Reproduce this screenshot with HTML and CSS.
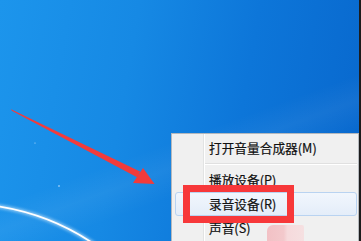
FILE: index.html
```html
<!DOCTYPE html>
<html lang="zh">
<head>
<meta charset="utf-8">
<link rel="stylesheet" href="styles.css">
</head>
<body>
<div class="desktop">
  <svg class="wallpaper" width="361" height="241" viewBox="0 0 361 241">
    <defs>
      <filter id="glow" x="-20%" y="-50%" width="140%" height="200%">
        <feGaussianBlur stdDeviation="1.4"/>
      </filter>
    </defs>
    <path d="M -4 206 Q 50 214 94 244" fill="none" stroke="#ffffff" stroke-width="4" opacity="0.5" filter="url(#glow)"/>
    <path d="M -4 206 Q 50 214 94 244" fill="none" stroke="#ffffff" stroke-width="1.8"/>
    <circle cx="59" cy="186" r="0.8" fill="#cfe8ff"/>
    <circle cx="35" cy="143" r="0.6" fill="#bfe0ff"/>
  </svg>

  <div class="menu">
    <div class="item">打开音量合成器(M)</div>
    <div class="sep"></div>
    <div class="item">播放设备(P)</div>
    <div class="item active">录音设备(R)</div>
    <div class="item">声音(S)</div>
  </div>

  <div class="blob"></div>
  <div class="redbox"></div>

  <svg class="arrow" width="361" height="241" viewBox="0 0 361 241">
    <polygon points="11,109.3 140,171.5 137.5,177.5 11.8,110.8" fill="#f23b3b"/>
    <polygon points="133,183 143,168 154.5,184" fill="#f23b3b"/>
  </svg>
</div>
</body>
</html>
```

FILE: styles.css
```css
html, body {
  margin: 0;
  padding: 0;
  background: #0a6ad0;
}

.desktop {
  position: relative;
  width: 361px;
  height: 241px;
  overflow: hidden;
  box-sizing: border-box;
  border-right: 2px solid #1c1c1c;
  background:
    linear-gradient(160deg, rgba(255,255,255,0) 55%, rgba(255,255,255,0.05) 62%, rgba(255,255,255,0) 70%),
    linear-gradient(100deg, #1c95ec 0%, #1689e4 35%, #0d76d9 65%, #0867cd 100%);
  font-family: "Noto Sans CJK SC", "Noto Sans", sans-serif;
}

.wallpaper {
  position: absolute;
  left: 0;
  top: 0;
}

.menu {
  position: absolute;
  left: 171px;
  top: 133px;
  width: 188px;
  height: 120px;
  box-sizing: border-box;
  border: 1px solid #b4b8bd;
  padding: 2px 1px 2px 3px;
  background: linear-gradient(to right, #f0f0f0 31px, #e2e3e3 31px, #e2e3e3 32px, #ffffff 32px, #ffffff 33px, #f0f0f0 33px);
  display: flex;
  flex-direction: column;
}

.item {
  height: 24px;
  line-height: 24px;
  padding-left: 34px;
  font-size: 12.7px;
  color: #111;
  -webkit-text-stroke: 0.2px #111;
  box-sizing: border-box;
  white-space: nowrap;
}

.item.active {
  border: 1px solid #b9d3f1;
  border-radius: 3px;
  line-height: 22px;
  padding-left: 33px;
  background: linear-gradient(#f1f6fd, #e4edf9);
}

.sep {
  height: 8px;
  margin-left: 30px;
  box-sizing: border-box;
  padding-top: 3px;
}

.sep::before {
  content: "";
  display: block;
  border-top: 1px solid #e0e0e0;
  border-bottom: 1px solid #ffffff;
}

.blob {
  position: absolute;
  left: 267px;
  top: 225px;
  width: 37px;
  height: 16px;
  border-radius: 6px 2px 0 0;
  background: linear-gradient(to right, #f2c1c5 0%, #f3c9cc 45%, #f6dadc 55%, #f5e0e1 100%);
  filter: blur(0.6px);
}

.redbox {
  position: absolute;
  left: 183px;
  top: 185px;
  width: 111px;
  height: 38px;
  box-sizing: border-box;
  border: 7px solid #f7383a;
}

.arrow {
  position: absolute;
  left: 0;
  top: 0;
}
```
